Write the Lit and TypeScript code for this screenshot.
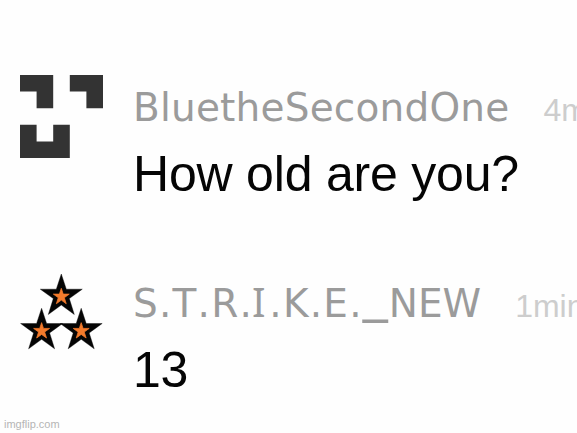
import { css, html, LitElement, svg } from "lit";
import { customElement, property } from "lit/decorators.js";

const STAR =
  "M0,-22 L5,-6.8 L21,-6.8 L8,2.6 L13,18.5 L0,9 L-13,18.5 L-8,2.6 L-21,-6.8 L-5,-6.8 Z";

const star = (x: number, y: number) => svg`
  <g transform="translate(${x} ${y})">
    <path d=${STAR} fill="#050505" stroke="#050505" stroke-width=".4" />
    <path d=${STAR} fill="#f47b2c" transform="translate(0 .7) scale(.38)"
      stroke="#f47b2c" stroke-width="2" />
  </g>
`;

const blocks = html`
  <svg width="83" height="83" viewBox="0 0 5 5">
    <path
      fill="#333"
      d="M0 0H2V2H1V1H0Z M3 0H5V2H4V1H3Z M0 3H1V4H2V3H3V5H0Z"
    />
  </svg>
`;

const stars = html`
  <svg width="83" height="83" viewBox="0 0 83 83">
    ${star(41.3, 25)} ${star(21.6, 59.3)} ${star(61.2, 59.3)}
  </svg>
`;

@customElement("chat-comment")
export class ChatComment extends LitElement {
  @property() time = "";

  static get styles() {
    return css`
      :host {
        display: flex;
        height: 196px;
        gap: 30px;
        white-space: nowrap;
      }
      .avatar {
        flex: none;
        width: 83px;
        padding-top: 4.5px;
      }
      .body {
        flex: none;
      }
      .head {
        display: flex;
        align-items: baseline;
        height: 71px;
        line-height: 76px;
      }
      .name {
        color: #9b9b9b;
        font: 39px/76px "DejaVu Sans", sans-serif;
        font-kerning: none;
      }
      .time {
        color: #cdcdcd;
        font-size: 32px;
        margin-left: 34px;
      }
      .text {
        color: #050505;
        font-size: 50px;
        line-height: 66px;
        letter-spacing: -0.2px;
      }
    `;
  }

  render() {
    return html`
      <div class="avatar"><slot name="avatar"></slot></div>
      <div class="body">
        <div class="head">
          <span class="name"><slot name="name"></slot></span>
          <span class="time">${this.time}</span>
        </div>
        <div class="text"><slot></slot></div>
      </div>
    `;
  }
}

@customElement("app-root")
export class AppRoot extends LitElement {
  static get styles() {
    return css`
      :host {
        display: flex;
        flex-direction: column;
        box-sizing: border-box;
        width: 577px;
        height: 433px;
        padding: 70px 0 0 20px;
        overflow: hidden;
        position: relative;
        background: #fefefe;
        font-family: "Liberation Sans", Arial, sans-serif;
      }
      chat-comment {
        flex: none;
      }
      svg {
        display: block;
      }
      .blue {
        letter-spacing: 0.2px;
      }
      .spaced {
        letter-spacing: 1.2px;
      }
      .serif-i {
        font-family: "Noto Sans", sans-serif;
        font-size: 40px;
        line-height: 1;
        margin: 0 2.5px 0 -1px;
      }
      .underscore {
        font-size: 50px;
        line-height: 0;
        vertical-align: 6px;
        margin-right: 1px;
      }
      .watermark {
        position: absolute;
        left: 4px;
        bottom: 2px;
        color: #b5b5b5;
        font-size: 11px;
        line-height: 13px;
      }
    `;
  }

  render() {
    return html`
      <chat-comment time="4mins">
        <span slot="avatar">${blocks}</span>
        <span slot="name" class="blue">BluetheSecondOne</span>
        How old are you?
      </chat-comment>
      <chat-comment time="1min">
        <span slot="avatar">${stars}</span>
        <span slot="name"
          ><span class="spaced">S.T.R.<span class="serif-i">I</span>.K.E.</span
          ><span class="underscore">_</span>NEW</span
        >
        13
      </chat-comment>
      <div class="watermark">imgflip.com</div>
    `;
  }
}
